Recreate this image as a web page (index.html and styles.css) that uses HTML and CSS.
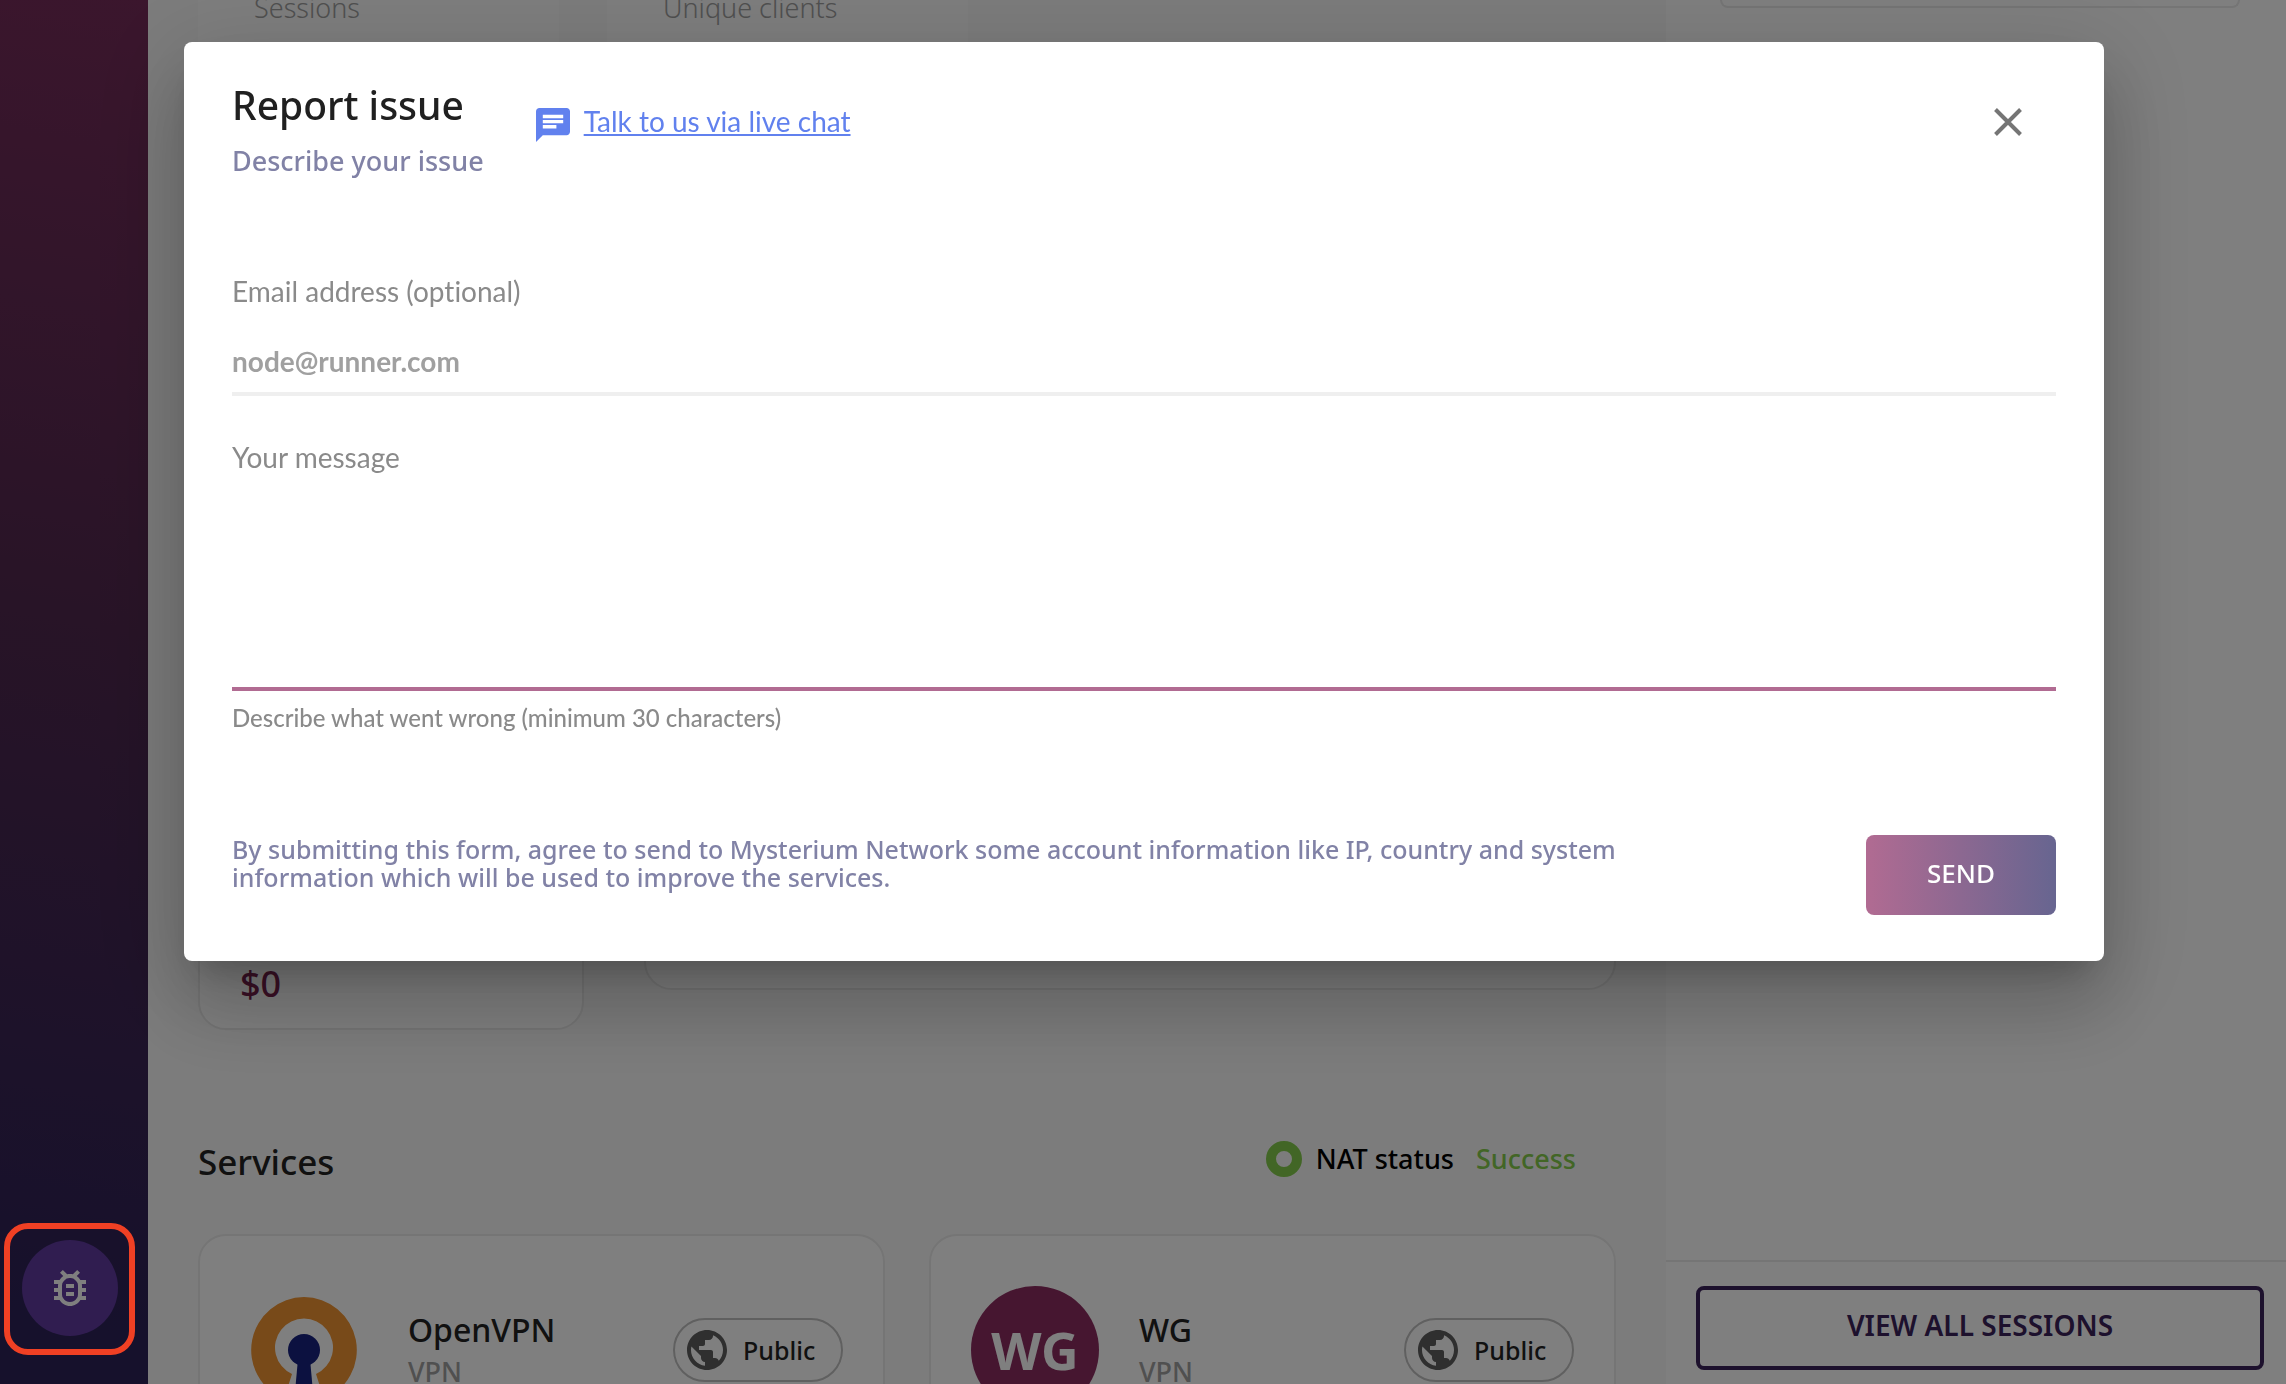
FILE: index.html
```html
<!DOCTYPE html>
<html lang="en">
<head>
<meta charset="utf-8">
<title>Report issue</title>
<link rel="stylesheet" href="styles.css">
</head>
<body>
<div class="app">
  <nav class="sidebar">
    <button class="bug-button" type="button" aria-label="Report issue">
      <svg viewBox="0 0 24 24" width="48" height="48" fill="currentColor"><path d="M20 8h-2.81c-.45-.78-1.07-1.45-1.82-1.96L17 4.41 15.59 3l-2.17 2.17C12.96 5.06 12.49 5 12 5s-.96.06-1.41.17L8.41 3 7 4.41l1.62 1.63C7.88 6.55 7.26 7.22 6.81 8H4v2h2.09c-.05.33-.09.66-.09 1v1H4v2h2v1c0 .34.04.67.09 1H4v2h2.81c1.04 1.79 2.97 3 5.19 3s4.15-1.21 5.19-3H20v-2h-2.09c.05-.33.09-.66.09-1v-1h2v-2h-2v-1c0-.34-.04-.67-.09-1H20V8zm-4 4v3c0 .22-.03.47-.07.7l-.1.65-.37.65c-.72 1.24-2.04 2-3.46 2s-2.74-.77-3.46-2l-.37-.64-.1-.65C8.03 15.48 8 15.23 8 15v-4c0-.23.03-.48.07-.7l.1-.65.37-.65c.3-.52.72-.97 1.21-1.31l.57-.39.74-.18c.31-.08.63-.12.94-.12.32 0 .63.04.95.12l.68.16.61.42c.5.34.91.78 1.21 1.31l.38.65.1.65c.04.22.07.47.07.69v1zm-6 2h4v2h-4zm0-4h4v2h-4z"/></svg>
    </button>
  </nav>

  <main class="main">
    <section class="stats">
      <div class="stat">Sessions</div>
      <div class="stat">Unique clients</div>
    </section>
    <section class="earnings">
      <div class="card balance">$0</div>
      <div class="card chart"></div>
    </section>
    <section class="services">
      <header class="services-head">
        <h2>Services</h2>
        <p class="nat"><span class="nat-dot"></span><span>NAT status</span><span class="nat-value">Success</span></p>
      </header>
      <div class="service-grid">
        <article class="card service">
          <div class="logo">
            <svg viewBox="0 0 106 106" width="106" height="106">
              <path fill="#f09432" d="M53 0a53 53 0 0 1 20 102l-8-25a29 29 0 1 0-24 0l-8 25A53 53 0 0 1 53 0z"/>
              <circle cx="53" cy="53" r="16" fill="#182280"/>
              <path fill="#182280" d="M47 62h12l4 44H43z"/>
            </svg>
          </div>
          <div class="service-name"><h3>OpenVPN</h3><p>VPN</p></div>
          <span class="pill">
            <svg viewBox="2 2 20 20" width="40" height="40" fill="currentColor"><path d="M12 2C6.48 2 2 6.48 2 12s4.480 10 10 10 10-4.480 10-10S17.520 2 12 2zm-1 17.930c-3.950-.49-7-3.850-7-7.930 0-.62.080-1.210.210-1.790L9 15v1c0 1.100.9 2 2 2v1.930zm6.900-2.540c-.26-.81-1-1.390-1.900-1.390h-1v-3c0-.55-.45-1-1-1H8v-2h2c.55 0 1-.45 1-1V7h2c1.100 0 2-.9 2-2v-.41c2.930 1.190 5 4.060 5 7.410 0 2.080-.8 3.970-2.100 5.390z"/></svg>
            Public
          </span>
        </article>
        <article class="card service">
          <div class="logo wg">WG</div>
          <div class="service-name"><h3>WG</h3><p>VPN</p></div>
          <span class="pill">
            <svg viewBox="2 2 20 20" width="40" height="40" fill="currentColor"><path d="M12 2C6.480 2 2 6.480 2 12s4.480 10 10 10 10-4.480 10-10S17.520 2 12 2zm-1 17.930c-3.950-.49-7-3.850-7-7.930 0-.62.080-1.210.210-1.790L9 15v1c0 1.100.9 2 2 2v1.930zm6.900-2.540c-.26-.81-1-1.390-1.900-1.390h-1v-3c0-.55-.45-1-1-1H8v-2h2c.55 0 1-.45 1-1V7h2c1.100 0 2-.9 2-2v-.41c2.930 1.190 5 4.060 5 7.410 0 2.080-.8 3.970-2.100 5.390z"/></svg>
            Public
          </span>
        </article>
      </div>
    </section>
  </main>

  <aside class="panel">
    <div class="session-card"></div>
    <footer class="panel-foot"><button class="outline-button" type="button">VIEW ALL SESSIONS</button></footer>
  </aside>
</div>

<div class="backdrop">
  <div class="dialog" role="dialog" aria-modal="true" aria-labelledby="dialog-title">
    <header class="dialog-head">
      <div>
        <h1 id="dialog-title">Report issue</h1>
        <p class="subtitle">Describe your issue</p>
      </div>
      <a class="chat" href="#chat">
        <svg viewBox="2 2 20 20" width="34" height="34" fill="currentColor"><path d="M20 2H4c-1.100 0-1.990.9-1.990 2L2 22l4-4h14c1.100 0 2-.9 2-2V4c0-1.100-.9-2-2-2zM6 9h12v2H6V9zm8 5H6v-2h8v2zm4-6H6V6h12v2z"/></svg>
        <span>Talk to us via live chat</span>
      </a>
      <button class="close" type="button" aria-label="Close">
        <svg viewBox="0 0 28 28" width="28" height="28" stroke="currentColor" stroke-width="4"><path d="M1.500 1.500l25 25M26.500 1.500l-25 25"/></svg>
      </button>
    </header>
    <form class="form">
      <label for="email">Email address (optional)</label>
      <input id="email" type="email" placeholder="node@runner.com">
      <label for="message">Your message</label>
      <textarea id="message" aria-describedby="hint"></textarea>
      <p class="hint" id="hint">Describe what went wrong (minimum 30 characters)</p>
      <div class="form-foot">
        <p class="terms">By submitting this form, agree to send to Mysterium Network some account information like IP, country and system information which will be used to improve the services.</p>
        <button class="send" type="button">SEND</button>
      </div>
    </form>
  </div>
</div>
<div class="highlight"></div>
</body>
</html>
```
FILE: styles.css
```css
* { box-sizing: border-box; }

body {
  margin: 0;
  overflow: hidden;
  font-family: "Noto Sans", sans-serif;
  font-weight: 500;
  font-variant-ligatures: none;
  color: #222;
}

h1, h2, h3, p { margin: 0; font-weight: 500; }
button, input, textarea { font: inherit; }
svg { display: block; flex: none; }

.app {
  display: grid;
  grid-template-columns: 148px 1fr 620px;
  grid-template-rows: minmax(0, 1fr);
  height: 100vh;
  overflow: hidden;
}

.sidebar {
  display: flex;
  flex-direction: column;
  justify-content: flex-end;
  padding: 0 22px 48px;
  background: linear-gradient(190deg, #762c5a 0%, #50284e 45%, #2c2258 95%);
}

.bug-button {
  display: grid;
  place-items: center;
  width: 96px;
  height: 96px;
  padding: 0;
  border: 0;
  border-radius: 50%;
  background: #603aa0;
  color: #fff;
}

.main {
  padding: 0 50px;
  background: #f9f9f9;
}

.card {
  border: 2px solid #eaeaea;
  border-radius: 28px;
  background: #fff;
}

.stats {
  display: flex;
  gap: 48px;
  height: 480px;
}

.stat {
  width: 361px;
  padding-left: 56px;
  background: #fcfcfc;
  color: #a0a0a0;
  font-size: 27px;
  font-weight: 300;
  line-height: 16px;
}

.earnings {
  display: grid;
  grid-template-columns: 386px 1fr;
  gap: 60px;
  align-items: start;
}

.balance {
  display: flex;
  align-items: flex-end;
  height: 550px;
  padding: 0 40px 20px;
  color: #76204c;
  font-size: 36px;
}

.chart { height: 510px; }

.services-head {
  display: flex;
  align-items: flex-start;
  justify-content: space-between;
  height: 204px;
  padding: 108px 40px 0 0;
}

h2 { font-size: 35px; line-height: 48px; }

.nat {
  display: flex;
  align-items: center;
  gap: 14px;
  color: #000;
  font-size: 27px;
  line-height: 42px;
}

.nat-dot {
  width: 36px;
  height: 36px;
  border: 10px solid #84cc4c;
  border-radius: 50%;
}

.nat-value { margin-left: 8px; color: #84cc4c; }

.service-grid {
  display: grid;
  grid-template-columns: 1fr 1fr;
  gap: 44px;
}

.service {
  display: flex;
  align-items: center;
  height: 232px;
  padding: 0 40px;
}

.logo {
  display: grid;
  place-items: center;
  width: 128px;
  height: 128px;
}

.wg {
  border-radius: 50%;
  background: #8c2c60;
  color: #fff;
  font-size: 52px;
  font-weight: 700;
  line-height: 64px;
}

.service-name { flex: 1; padding-left: 40px; }

h3 { font-size: 32px; line-height: 44px; }

.service-name p { color: #a0a0a0; font-size: 27px; line-height: 40px; }

.pill {
  display: flex;
  align-items: center;
  gap: 16px;
  width: 170px;
  height: 64px;
  padding-left: 12px;
  border: 2px solid #c0c0c0;
  border-radius: 32px;
  font-size: 25px;
}

.pill svg { color: #5e5e5e; }

.panel {
  display: flex;
  flex-direction: column;
  justify-content: space-between;
  background: #fff;
}

.session-card {
  height: 8px;
  margin: 0 46px 0 54px;
  border: 2px solid #eaeaea;
  border-top: 0;
  border-radius: 0 0 24px 24px;
}

.panel-foot {
  padding: 24px 22px 14px 30px;
  border-top: 2px solid #eaeaea;
}

.outline-button {
  display: block;
  width: 100%;
  height: 84px;
  padding: 0 0 6px;
  border: 4px solid #3a225a;
  border-radius: 8px;
  background: none;
  color: #3a225a;
  font-size: 28px;
  font-weight: 600;
}

.backdrop {
  position: fixed;
  inset: 0;
  padding: 42px 182px 0 184px;
  background: rgba(0, 0, 0, 0.5);
}

.dialog {
  padding: 24px 48px 46px;
  border-radius: 8px;
  background: #fff;
  box-shadow:
    0 22px 30px -14px rgba(0, 0, 0, 0.2),
    0 48px 76px 6px rgba(0, 0, 0, 0.14),
    0 18px 92px 16px rgba(0, 0, 0, 0.12);
}

.dialog-head {
  display: flex;
  align-items: center;
}

h1 { color: #202020; font-size: 39px; line-height: 78px; }

.subtitle {
  color: #8182a6;
  font-size: 27px;
  line-height: 34px;
}

.chat {
  display: flex;
  align-items: flex-end;
  gap: 14px;
  margin-left: 52px;
  color: #6181ee;
  font: 400 28px/38px Lato, sans-serif;
  font-variant-ligatures: none;
}

.chat span { padding-bottom: 2px; }

.close {
  margin-left: auto;
  margin-right: 34px;
  padding: 0;
  border: 0;
  background: none;
  color: #757575;
}

.form {
  display: flex;
  flex-direction: column;
  padding-top: 93px;
  font-family: Lato, sans-serif;
  font-weight: 400;
}

label { color: #8a8a8a; font-size: 28px; line-height: 40px; }

input, textarea {
  width: 100%;
  padding: 0;
  border: 0;
  border-bottom: 4px solid #efefef;
  border-radius: 0;
  background: none;
  outline: 0;
  resize: none;
}

input {
  height: 64px;
  margin: 21px 0 41px;
  padding-bottom: 2px;
  font-size: 28px;
  font-weight: 700;
}

input::placeholder { color: #a0a0a0; opacity: 1; }

textarea { height: 214px; border-color: #b16b92; }

.hint { color: #8a8a8a; font-size: 24px; line-height: 54px; }

.form-foot {
  display: flex;
  justify-content: space-between;
  align-items: flex-start;
  padding-top: 90px;
  font-family: "Noto Sans", sans-serif;
}

.terms {
  width: 1400px;
  color: #8182a6;
  font-size: 25px;
  font-weight: 500;
  line-height: 28px;
}

.send {
  width: 190px;
  height: 80px;
  padding: 0 0 4px;
  border: 0;
  border-radius: 8px;
  background: linear-gradient(90deg, #b16b92, #676590);
  color: #fff;
  font-size: 26px;
  font-weight: 500;
}

/* Ring drawn over the sidebar to point at the bug button */
.highlight {
  position: fixed;
  left: 4px;
  bottom: 29px;
  width: 131px;
  height: 132px;
  border: 6px solid #f04024;
  border-radius: 24px;
}
```
